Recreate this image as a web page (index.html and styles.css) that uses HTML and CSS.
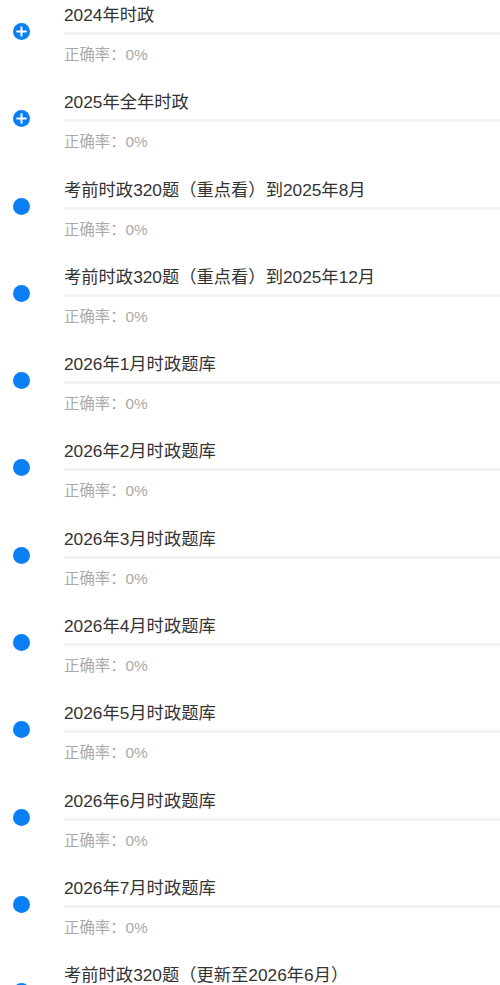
FILE: index.html
```html
<!DOCTYPE html>
<html lang="zh">
<head>
<meta charset="utf-8">
<link rel="stylesheet" href="styles.css">
</head>
<body>
<div class="list">
  <div class="item">
    <div class="icon-col"><span class="dot plus"><svg viewBox="0 0 18 18" width="17" height="17"><circle cx="9" cy="9" r="9" fill="#0a7ff5"/><path d="M9 4.4v9.2M4.4 9h9.2" stroke="#fff" stroke-width="2.1" stroke-linecap="round"/></svg></span></div>
    <div class="content"><div class="title">2024年时政</div><div class="bar"></div><div class="sub">正确率：0%</div></div>
  </div>
  <div class="item">
    <div class="icon-col"><span class="dot plus"><svg viewBox="0 0 18 18" width="17" height="17"><circle cx="9" cy="9" r="9" fill="#0a7ff5"/><path d="M9 4.4v9.2M4.4 9h9.2" stroke="#fff" stroke-width="2.1" stroke-linecap="round"/></svg></span></div>
    <div class="content"><div class="title">2025年全年时政</div><div class="bar"></div><div class="sub">正确率：0%</div></div>
  </div>
  <div class="item">
    <div class="icon-col"><span class="dot"></span></div>
    <div class="content"><div class="title">考前时政320题（重点看）到2025年8月</div><div class="bar"></div><div class="sub">正确率：0%</div></div>
  </div>
  <div class="item">
    <div class="icon-col"><span class="dot"></span></div>
    <div class="content"><div class="title">考前时政320题（重点看）到2025年12月</div><div class="bar"></div><div class="sub">正确率：0%</div></div>
  </div>
  <div class="item">
    <div class="icon-col"><span class="dot"></span></div>
    <div class="content"><div class="title">2026年1月时政题库</div><div class="bar"></div><div class="sub">正确率：0%</div></div>
  </div>
  <div class="item">
    <div class="icon-col"><span class="dot"></span></div>
    <div class="content"><div class="title">2026年2月时政题库</div><div class="bar"></div><div class="sub">正确率：0%</div></div>
  </div>
  <div class="item">
    <div class="icon-col"><span class="dot"></span></div>
    <div class="content"><div class="title">2026年3月时政题库</div><div class="bar"></div><div class="sub">正确率：0%</div></div>
  </div>
  <div class="item">
    <div class="icon-col"><span class="dot"></span></div>
    <div class="content"><div class="title">2026年4月时政题库</div><div class="bar"></div><div class="sub">正确率：0%</div></div>
  </div>
  <div class="item">
    <div class="icon-col"><span class="dot"></span></div>
    <div class="content"><div class="title">2026年5月时政题库</div><div class="bar"></div><div class="sub">正确率：0%</div></div>
  </div>
  <div class="item">
    <div class="icon-col"><span class="dot"></span></div>
    <div class="content"><div class="title">2026年6月时政题库</div><div class="bar"></div><div class="sub">正确率：0%</div></div>
  </div>
  <div class="item">
    <div class="icon-col"><span class="dot"></span></div>
    <div class="content"><div class="title">2026年7月时政题库</div><div class="bar"></div><div class="sub">正确率：0%</div></div>
  </div>
  <div class="item">
    <div class="icon-col"><span class="dot"></span></div>
    <div class="content"><div class="title">考前时政320题（更新至2026年6月）</div><div class="bar"></div><div class="sub">正确率：0%</div></div>
  </div>
</div>
</body>
</html>
```
FILE: styles.css
```css
html, body {
  margin: 0;
  padding: 0;
  background: #fff;
  overflow: hidden;
}
body {
  font-family: "Liberation Sans", "Noto Sans CJK SC", sans-serif;
  width: 500px;
  height: 985px;
}
.list {
  display: flex;
  flex-direction: column;
}
.item {
  display: flex;
  height: 87.3px;
  flex-shrink: 0;
  box-sizing: border-box;
  padding-top: 4px;
}
.icon-col {
  width: 64px;
  flex-shrink: 0;
  display: flex;
  justify-content: flex-start;
  padding-left: 13px;
  box-sizing: border-box;
}
.dot {
  display: block;
  width: 17px;
  height: 17px;
  margin-top: 19px;
  border-radius: 50%;
  background: #0a7ff5;
}
.dot.plus {
  background: none;
}
.dot svg {
  display: block;
}
.content {
  flex: 1;
  min-width: 0;
}
.title {
  font-size: 17.3px;
  line-height: 22px;
  color: #333;
  white-space: nowrap;
}
.bar {
  height: 3px;
  margin-top: 6px;
  background: #f3f3f3;
}
.sub {
  font-size: 15.4px;
  line-height: 20px;
  margin-top: 10px;
  color: #aaa;
}
```
